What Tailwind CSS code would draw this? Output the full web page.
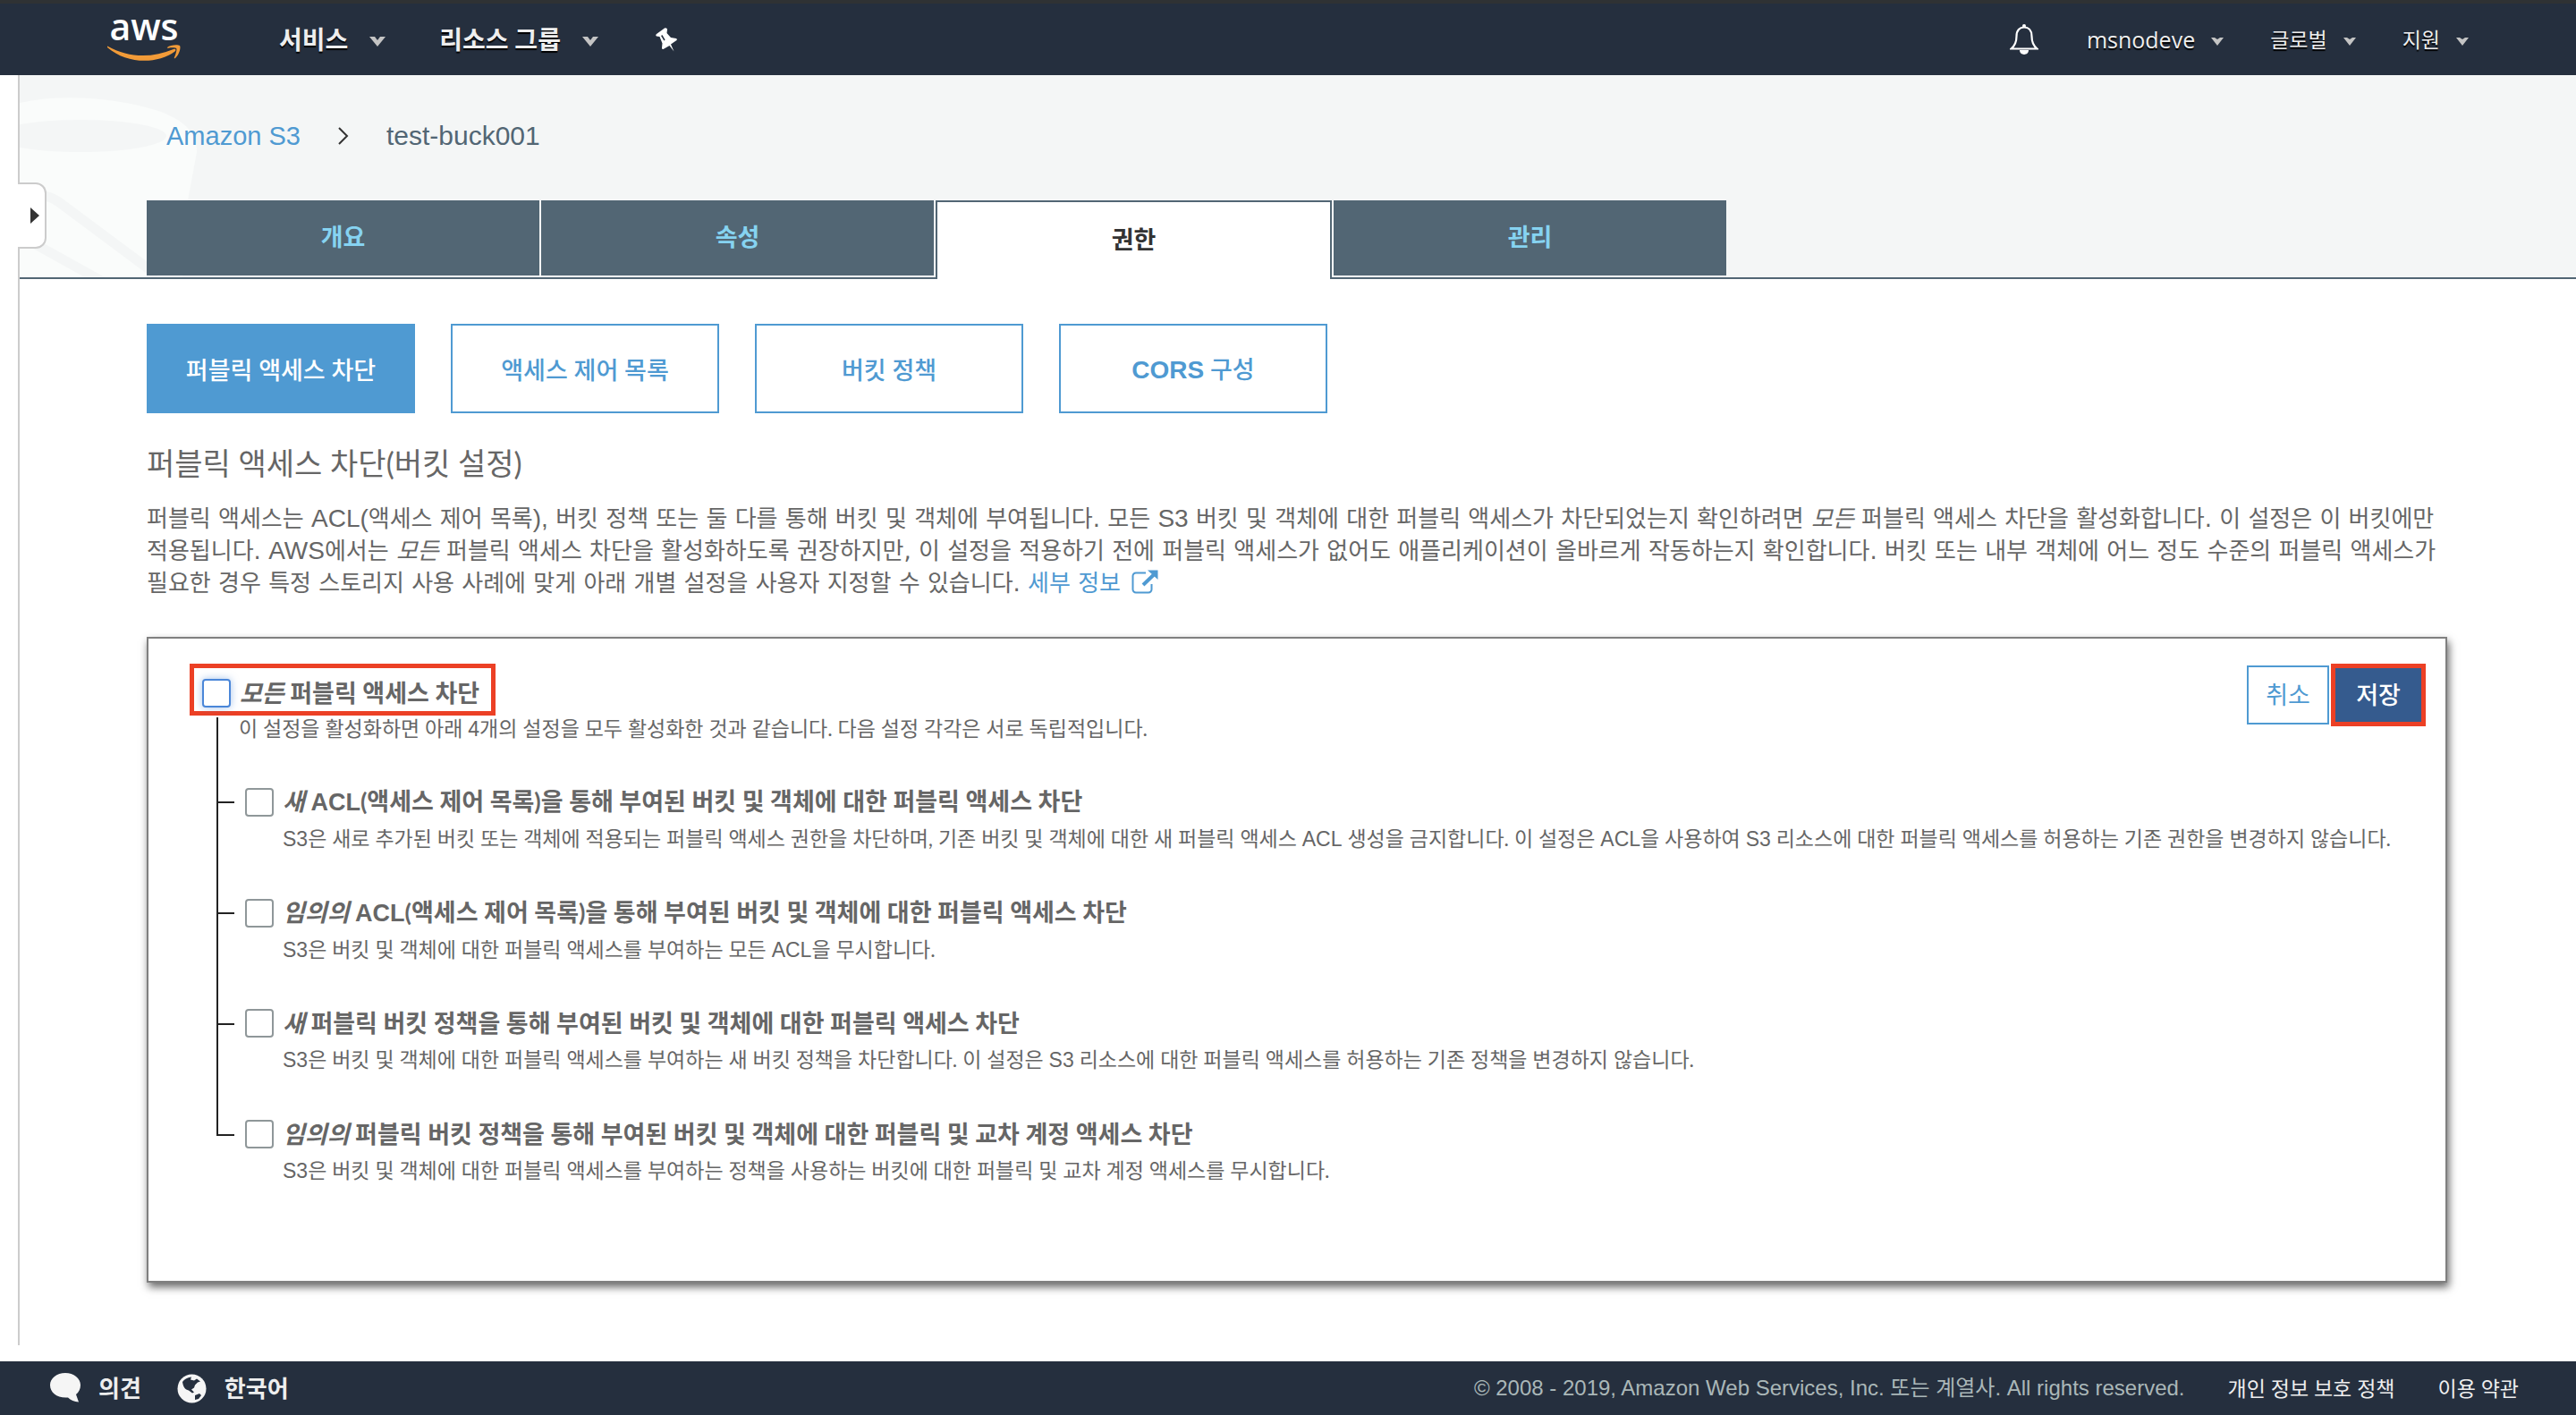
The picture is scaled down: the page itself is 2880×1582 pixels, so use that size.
<!DOCTYPE html>
<html lang="ko">
<head>
<meta charset="utf-8">
<title>S3 Management Console</title>
<script src="https://cdn.jsdelivr.net/npm/@tailwindcss/browser@4"></script>
</head>
<body class="flex min-h-screen flex-col bg-white font-['Lato','Noto_Sans_CJK_KR',sans-serif] text-[#666] break-keep">

<header class="flex h-[84px] items-center border-t-4 border-[#2f3234] bg-[#252f3e] px-[120px] text-[#eee]">
  <a href="#" aria-label="AWS" class="mr-[108px] block">
    <svg class="overflow-visible" width="84" height="80" viewBox="0 0 84 80">
      <text x="41" y="41" text-anchor="middle" font-family="Open Sans" font-weight="600" font-size="41" fill="#fff">aws</text>
      <path d="M0 47.5C24 61 50 61 74 51c2-1 3.500 1 1.500 2.500C56 68 22 68 0 49z" fill="#f29b38"/>
      <path d="M67 49c3-3 12-3.500 14-2 1.500 2-.5 10-5 14-1 .8-1.500.2-1-1 1.500-3.500 3-8.500 2.300-9.800-1-1.200-6-.9-9-.5-1.300 0-1.800-.2-1.300-.7z" fill="#f29b38"/>
    </svg>
  </a>
  <nav class="flex flex-1 items-center text-[28px] font-bold leading-8 [text-shadow:0_2px_1px_#000]">
    <button class="flex items-center gap-6 font-bold [text-shadow:inherit]">서비스
      <svg class="mt-1" width="18" height="12" viewBox="0 0 18 12"><path d="M0 1h6l3 4 3-4h6l-9 11z" fill="#c4c4c4"/></svg></button>
    <button class="ml-[60px] flex items-center gap-6 font-bold [text-shadow:inherit]">리소스 그룹
      <svg class="mt-1" width="18" height="12" viewBox="0 0 18 12"><path d="M0 1h6l3 4 3-4h6l-9 11z" fill="#c4c4c4"/></svg></button>
    <button aria-label="고정" class="ml-[64px]">
      <svg width="24" height="27" viewBox="0 0 24 27"><path d="M1 7L10 .5c1.500-.6 3 .2 3 1.500L12.500 6 17 11l6 1c1 .5 1 1.500.5 2L17 18.500l3.500 8L15.500 20l-7 4c-1 .2-1.500-.5-1.500-1.500l.5-5-3-7.500L1 9.500C0 9 0 8 1 7z" fill="#fff"/><path d="M6.700 8.500l3.300 5.500" stroke="#252f3e" stroke-width="1.500"/></svg></button>
  </nav>
  <div class="flex items-center text-[23px] leading-8 [text-shadow:0_2px_1px_#000]">
    <button aria-label="알림">
      <svg width="32" height="34" viewBox="0 0 32 34" fill="none" stroke="#fff" stroke-width="2.200"><path d="M1.500 27.500c5-4 6-9 6-14C7.500 7 11 3.500 16 3.500s8.500 3.500 8.500 10c0 5 1 10 6 14z"/><path d="M11 29c0 6.500 10 6.500 10 0z" fill="#fff" stroke="none"/><circle cx="16" cy="2" r="2" fill="#fff" stroke="none"/></svg></button>
    <button class="ml-[54px] flex items-center gap-[18px] font-['Open_Sans'] text-[25px] [text-shadow:inherit]">msnodeve
      <svg class="mt-1" width="14" height="10" viewBox="0 0 14 10"><path d="M0 1h4l3 2 3-2h4L7 10z" fill="#c4c4c4"/></svg></button>
    <button class="ml-[52px] flex items-center gap-[18px] [text-shadow:inherit]">글로벌
      <svg class="mt-1" width="14" height="10" viewBox="0 0 14 10"><path d="M0 1h4l3 2 3-2h4L7 10z" fill="#c4c4c4"/></svg></button>
    <button class="ml-[52px] flex items-center gap-[18px] [text-shadow:inherit]">지원
      <svg class="mt-1" width="14" height="10" viewBox="0 0 14 10"><path d="M0 1h4l3 2 3-2h4L7 10z" fill="#c4c4c4"/></svg></button>
  </div>
</header>

<main class="relative mb-[18px] ml-5 flex-1 border-l-2 border-[#ccc]">
  <button aria-label="메뉴 열기" class="absolute -left-[2px] top-[120px] z-10 flex h-[74px] w-[32px] items-center justify-end rounded-r-xl border-2 border-l-0 border-[#ccc] bg-white pr-[6px]">
    <svg width="10" height="18" viewBox="0 0 10 18"><path d="M0 0l10 9-10 9z" fill="#333"/></svg>
  </button>

  <section class="relative border-b-2 border-[#526674] bg-[#f4f6f6]">
    <svg class="absolute left-0 top-0" width="240" height="226" viewBox="0 0 240 226">
      <path d="M0 31C50 20 110 26 155 40c28 10 44 24 43 46l-10 54-6 86H0z" fill="#fafcfb"/>
      <ellipse cx="68" cy="68" rx="96" ry="18" fill="#f4f6f6"/>
      <path d="M0 146c14-14 30-14 44-4l110 82M12 186l90 50" stroke="#f4f6f6" stroke-width="11" fill="none"/>
    </svg>
    <div class="relative">
      <nav class="flex h-[140px] items-start gap-[42px] pl-[164px] pt-[50px] font-['Liberation_Sans'] text-[29px] leading-9">
        <a href="#" class="text-[#4f9ad2]">Amazon S3</a>
        <svg class="mt-[8px]" width="12" height="20" viewBox="0 0 12 20" fill="none" stroke="#333" stroke-width="2"><path d="M1 1l9 9-9 9"/></svg>
        <span class="text-[30px] text-[#526674]">test-buck001</span>
      </nav>
      <nav class="-mb-[2px] ml-[142px] flex h-[88px] w-[1766px] items-start gap-[2px] text-[27px] font-bold">
        <button class="h-[84px] flex-1 bg-[#526674] pb-[2px] text-[#86d3f1]">개요</button>
        <button class="h-[84px] flex-1 bg-[#526674] pb-[2px] text-[#86d3f1]">속성</button>
        <button class="h-[88px] flex-1 border-2 border-b-0 border-[#526674] bg-white pb-[2px] text-[#333]">권한</button>
        <button class="h-[84px] flex-1 bg-[#526674] pb-[2px] text-[#86d3f1]">관리</button>
      </nav>
    </div>
  </section>

  <div class="pb-[68px] pl-[142px] pr-[144px] pt-[50px]">
    <div class="flex gap-10 text-[27px] font-medium text-[#4f9ad2]">
      <button class="h-[100px] w-[300px] border-2 border-[#4f9ad2] bg-[#4f9ad2] pt-1 text-white">퍼블릭 액세스 차단</button>
      <button class="h-[100px] w-[300px] border-2 border-[#4f9ad2] bg-white pt-1">액세스 제어 목록</button>
      <button class="h-[100px] w-[300px] border-2 border-[#4f9ad2] bg-white pt-1">버킷 정책</button>
      <button class="h-[100px] w-[300px] border-2 border-[#4f9ad2] bg-white pt-1"><b class="font-['Liberation_Sans'] text-[28px]">CORS</b> 구성</button>
    </div>
    <h1 class="mt-[32px] text-[34px] leading-[48px]">퍼블릭 액세스 차단(버킷 설정)</h1>
    <p class="-mr-4 mt-[20px] font-['DejaVu_Sans','Noto_Sans_CJK_KR',sans-serif] text-[26px] leading-9">퍼블릭 액세스는 <span class="font-['Liberation_Sans'] text-[28px]">ACL(</span>액세스 제어 목록<span class="font-['Liberation_Sans'] text-[28px]">),</span> 버킷 정책 또는 둘 다를 통해 버킷 및 객체에 부여됩니다. 모든 <span class="font-['Liberation_Sans'] text-[28px]">S3</span> 버킷 및 객체에 대한 퍼블릭 액세스가 차단되었는지 확인하려면 <em>모든</em> 퍼블릭 액세스 차단을 활성화합니다. 이 설정은 이 버킷에만<br>적용됩니다. <span class="font-['Liberation_Sans'] text-[28px]">AWS</span>에서는 <em>모든</em> 퍼블릭 액세스 차단을 활성화하도록 권장하지만, 이 설정을 적용하기 전에 퍼블릭 액세스가 없어도 애플리케이션이 올바르게 작동하는지 확인합니다. 버킷 또는 내부 객체에 어느 정도 수준의 퍼블릭 액세스가<br>필요한 경우 특정 스토리지 사용 사례에 맞게 아래 개별 설정을 사용자 지정할 수 있습니다. <a href="#" class="text-[#4f9ad2]">세부 정보 <svg class="ml-1 inline-block align-[-3px]" width="30" height="27" viewBox="0 0 30 27" fill="none" stroke="#4f9ad2"><path d="M16 3.500H5A3.500 3.500 0 0 0 1.500 7v15A3.500 3.500 0 0 0 5 25.500h14a3.500 3.500 0 0 0 3.500-3.500v-6" stroke-width="2"/><path d="M13 17L25 5.500" stroke-width="4"/><path d="M18 .5h11.500V11z" fill="#4f9ad2" stroke="none"/></svg></a></p>

    <form class="mt-[42px] min-h-[722px] border-2 border-[#7f7f7f] bg-white pl-[46px] pr-[22px] pt-[28px] shadow-[2px_5px_9px_rgba(0,0,0,0.6)]">
      <div class="flex items-start justify-between">
        <div>
          <label class="flex h-[58px] w-[342px] items-center gap-[10px] border-[5px] border-[#ec4025] pl-[9px] pt-2 text-[27px] font-bold">
            <input type="checkbox" class="size-8 appearance-none rounded border-2 border-[#4a86d8] bg-white shadow-[0_0_8px_rgba(74,134,216,0.5)]">
            <span><em>모든</em> 퍼블릭 액세스 차단</span>
          </label>
          <p class="ml-[30px] mt-[2px] h-[78px] border-l-2 border-[#222] pl-[23px] text-[23px] leading-6">이 설정을 활성화하면 아래 <span class="font-['Liberation_Sans']">4</span>개의 설정을 모두 활성화한 것과 같습니다. 다음 설정 각각은 서로 독립적입니다.</p>
        </div>
        <div class="flex items-center text-[27px]">
          <button type="button" class="h-[66px] w-[92px] border-2 border-[#4f9ad2] bg-white text-[#4f9ad2]">취소</button>
          <button type="submit" class="ml-[2px] h-[70px] w-[106px] border-[5px] border-[#ec4025] bg-[#355b8e] font-medium text-white">저장</button>
        </div>
      </div>
      <ul class="ml-[30px]">
        <li class="flex h-[124px] gap-3">
          <div class="flex w-5 flex-col"><i class="h-[18px] border-b-2 border-l-2 border-[#222]"></i><i class="flex-1 border-l-2 border-[#222]"></i></div>
          <div>
            <label class="flex items-center gap-[10px] text-[27px] font-bold leading-8">
              <input type="checkbox" class="size-8 appearance-none rounded border-2 border-[#8f9799] bg-white">
              <span><em>새</em> <span class="font-['Liberation_Sans']">ACL</span>(액세스 제어 목록)을 통해 부여된 버킷 및 객체에 대한 퍼블릭 액세스 차단</span>
            </label>
            <p class="mt-[10px] pl-[42px] text-[23px] leading-7"><span class="font-['Liberation_Sans']">S3</span>은 새로 추가된 버킷 또는 객체에 적용되는 퍼블릭 액세스 권한을 차단하며, 기존 버킷 및 객체에 대한 새 퍼블릭 액세스 <span class="font-['Liberation_Sans']">ACL</span> 생성을 금지합니다. 이 설정은 <span class="font-['Liberation_Sans']">ACL</span>을 사용하여 <span class="font-['Liberation_Sans']">S3</span> 리소스에 대한 퍼블릭 액세스를 허용하는 기존 권한을 변경하지 않습니다.</p>
          </div>
        </li>
        <li class="flex h-[124px] gap-3">
          <div class="flex w-5 flex-col"><i class="h-[18px] border-b-2 border-l-2 border-[#222]"></i><i class="flex-1 border-l-2 border-[#222]"></i></div>
          <div>
            <label class="flex items-center gap-[10px] text-[27px] font-bold leading-8">
              <input type="checkbox" class="size-8 appearance-none rounded border-2 border-[#8f9799] bg-white">
              <span><em>임의의</em> <span class="font-['Liberation_Sans']">ACL</span>(액세스 제어 목록)을 통해 부여된 버킷 및 객체에 대한 퍼블릭 액세스 차단</span>
            </label>
            <p class="mt-[10px] pl-[42px] text-[23px] leading-7"><span class="font-['Liberation_Sans']">S3</span>은 버킷 및 객체에 대한 퍼블릭 액세스를 부여하는 모든 <span class="font-['Liberation_Sans']">ACL</span>을 무시합니다.</p>
          </div>
        </li>
        <li class="flex h-[124px] gap-3">
          <div class="flex w-5 flex-col"><i class="h-[18px] border-b-2 border-l-2 border-[#222]"></i><i class="flex-1 border-l-2 border-[#222]"></i></div>
          <div>
            <label class="flex items-center gap-[10px] text-[27px] font-bold leading-8">
              <input type="checkbox" class="size-8 appearance-none rounded border-2 border-[#8f9799] bg-white">
              <span><em>새</em> 퍼블릭 버킷 정책을 통해 부여된 버킷 및 객체에 대한 퍼블릭 액세스 차단</span>
            </label>
            <p class="mt-[10px] pl-[42px] text-[23px] leading-7"><span class="font-['Liberation_Sans']">S3</span>은 버킷 및 객체에 대한 퍼블릭 액세스를 부여하는 새 버킷 정책을 차단합니다. 이 설정은 <span class="font-['Liberation_Sans']">S3</span> 리소스에 대한 퍼블릭 액세스를 허용하는 기존 정책을 변경하지 않습니다.</p>
          </div>
        </li>
        <li class="flex gap-3">
          <div class="flex w-5 flex-col"><i class="h-[18px] border-b-2 border-l-2 border-[#222]"></i></div>
          <div>
            <label class="flex items-center gap-[10px] text-[27px] font-bold leading-8">
              <input type="checkbox" class="size-8 appearance-none rounded border-2 border-[#8f9799] bg-white">
              <span><em>임의의</em> 퍼블릭 버킷 정책을 통해 부여된 버킷 및 객체에 대한 퍼블릭 및 교차 계정 액세스 차단</span>
            </label>
            <p class="mt-[10px] pl-[42px] text-[23px] leading-7"><span class="font-['Liberation_Sans']">S3</span>은 버킷 및 객체에 대한 퍼블릭 액세스를 부여하는 정책을 사용하는 버킷에 대한 퍼블릭 및 교차 계정 액세스를 무시합니다.</p>
          </div>
        </li>
      </ul>
    </form>
  </div>
</main>

<footer class="flex h-[60px] items-center bg-[#252f3e] pl-[56px] pr-[64px] text-[#eee]">
  <button class="flex items-center gap-5 text-[26px] font-bold">
    <svg width="34" height="34" viewBox="0 0 34 34"><path d="M17 0c9.500 0 17 6 17 13.500 0 4.500-2 8-5 10.500l3 8.500c-5-.5-9-2-12-5C8 28.500 0 22 0 13.500 0 6 7.500 0 17 0z" fill="#f5f5f5"/></svg>
    의견</button>
  <button class="ml-10 flex items-center gap-5 text-[26px] font-bold">
    <svg width="33" height="33" viewBox="0 0 33 33"><circle cx="16.500" cy="16.500" r="16" fill="#f5f5f5"/><path d="M6 9c2-3 5-4.500 10-5.500l-1 3 4 1 3-2 4 3-3 1-3 3-1 3-3 2 3 3-2 1-4-3c-4-1-6-3-7-9.500zM20 24l5-2 2 2-3 4-4 1z" fill="#252f3e"/></svg>
    한국어</button>
  <div class="ml-auto flex items-center gap-12 text-[23px]">
    <span class="font-['Liberation_Sans','Noto_Sans_CJK_KR',sans-serif] text-[24px] text-[#aab7b8]">© 2008 - 2019, Amazon Web Services, Inc. 또는 계열사. All rights reserved.</span>
    <a href="#">개인 정보 보호 정책</a>
    <a href="#">이용 약관</a>
  </div>
</footer>
</body>
</html>
